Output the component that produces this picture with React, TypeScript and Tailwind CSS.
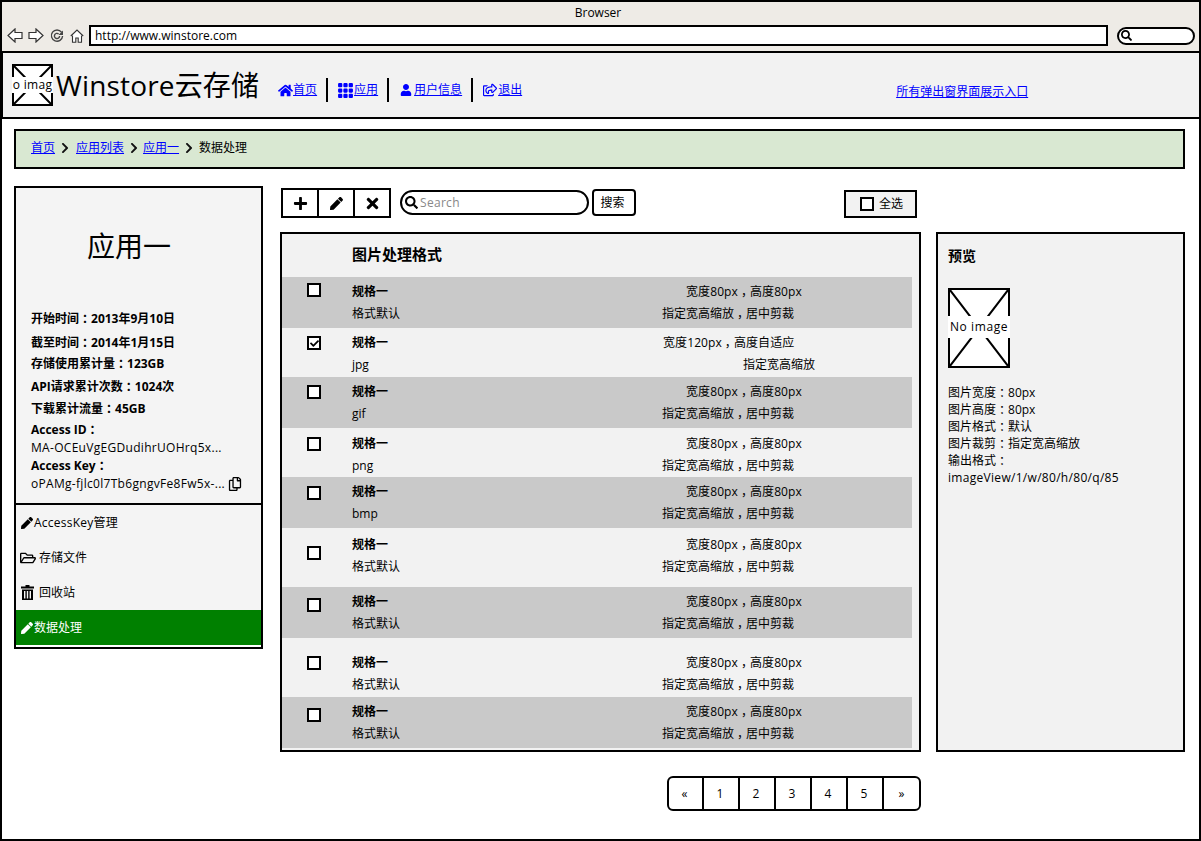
import React from "react";
import { BsGrid3X3GapFill } from "react-icons/bs";
import {
  FaChevronRight,
  FaCheck,
  FaHome,
  FaPen,
  FaPlus,
  FaRegCopy,
  FaRegFolderOpen,
  FaRegShareSquare,
  FaSearch,
  FaTimes,
  FaUser,
} from "react-icons/fa";

type SpecRow = {
  id: number;
  format: string;
  size: string;
  crop: string;
  rowClass: string;
  textClass: string;
  boxClass: string;
  sizeClass: string;
  cropClass: string;
  checked?: boolean;
};

const specRows: SpecRow[] = [
  { id: 1, format: "格式默认", size: "宽度80px，高度80px", crop: "指定宽高缩放，居中剪裁", rowClass: "h-[51px] bg-[#c9c9c9]", textClass: "pt-[3px]", boxClass: "mt-[6px]", sizeClass: "ml-[334px]", cropClass: "ml-[310px]" },
  { id: 2, format: "jpg", size: "宽度120px，高度自适应", crop: "指定宽高缩放", rowClass: "h-[49px]", textClass: "pt-[3px]", boxClass: "mt-[8px]", sizeClass: "ml-[311px]", cropClass: "ml-[391px]", checked: true },
  { id: 3, format: "gif", size: "宽度80px，高度80px", crop: "指定宽高缩放，居中剪裁", rowClass: "h-[51px] bg-[#c9c9c9]", textClass: "pt-[3px]", boxClass: "mt-[8px]", sizeClass: "ml-[334px]", cropClass: "ml-[310px]" },
  { id: 4, format: "png", size: "宽度80px，高度80px", crop: "指定宽高缩放，居中剪裁", rowClass: "h-[49px]", textClass: "pt-[4px]", boxClass: "mt-[9px]", sizeClass: "ml-[334px]", cropClass: "ml-[310px]" },
  { id: 5, format: "bmp", size: "宽度80px，高度80px", crop: "指定宽高缩放，居中剪裁", rowClass: "h-[51px] bg-[#c9c9c9]", textClass: "pt-[3px]", boxClass: "mt-[9px]", sizeClass: "ml-[334px]", cropClass: "ml-[310px]" },
  { id: 6, format: "格式默认", size: "宽度80px，高度80px", crop: "指定宽高缩放，居中剪裁", rowClass: "h-[59px]", textClass: "pt-[5px]", boxClass: "mt-[18px]", sizeClass: "ml-[334px]", cropClass: "ml-[310px]" },
  { id: 7, format: "格式默认", size: "宽度80px，高度80px", crop: "指定宽高缩放，居中剪裁", rowClass: "h-[51px] bg-[#c9c9c9]", textClass: "pt-[3px]", boxClass: "mt-[11px]", sizeClass: "ml-[334px]", cropClass: "ml-[310px]" },
  { id: 8, format: "格式默认", size: "宽度80px，高度80px", crop: "指定宽高缩放，居中剪裁", rowClass: "h-[59px]", textClass: "pt-[13px]", boxClass: "mt-[18px]", sizeClass: "ml-[334px]", cropClass: "ml-[310px]" },
  { id: 9, format: "格式默认", size: "宽度80px，高度80px", crop: "指定宽高缩放，居中剪裁", rowClass: "h-[51px] bg-[#c9c9c9]", textClass: "pt-[3px]", boxClass: "mt-[11px]", sizeClass: "ml-[334px]", cropClass: "ml-[310px]" },
];

const fontStack = "font-['Open_Sans','Noto_Sans_CJK_SC',sans-serif]";

// the picture's font centres ， and ： in their cell: halt halves the glyph, the box centres it
const Zh = ({ text }: { text: string }) => (
  <>
    {text.split(/([，：])/).map((part, i) =>
      part === "，" || part === "：" ? (
        <span key={i} className="inline-block w-[1em] text-center [font-feature-settings:'halt']">
          {part}
        </span>
      ) : (
        <React.Fragment key={i}>{part}</React.Fragment>
      )
    )}
  </>
);

// browser chrome glyphs have no good match in the icon sets
const BackArrow = ({ flip = false }: { flip?: boolean }) => (
  <svg width="16" height="15" viewBox="0 0 16 15" className={flip ? "-scale-x-100" : ""}>
    <path d="M8 1 1 7.5 8 14v-3.5h7v-6H8z" fill="#fff" stroke="#333" strokeWidth="1.2" />
  </svg>
);

const ReloadIcon = () => (
  <svg width="14" height="14" viewBox="0 0 14 14" fill="none" stroke="#444" strokeWidth="1.4">
    <path d="M11.5 3.2A5.6 5.6 0 1 0 12.6 7" />
    <path d="M9.6 7A2.6 2.6 0 1 1 8.6 4.9" />
    <path d="M13 1.5v4.5H8.5z" fill="#444" stroke="none" />
  </svg>
);

const HomeOutline = () => (
  <svg width="14" height="14" viewBox="0 0 14 14" fill="#fff" stroke="#333" strokeWidth="1.1">
    <path d="M.8 7 7 1l6.2 6" />
    <path d="M2.5 6.5v6.7h3.3V9h2.4v4.2h3.3V6.5" />
  </svg>
);

const TrashIcon = () => (
  <svg width="13" height="15" viewBox="0 0 13 15" className="mr-[5px] ml-[1px]">
    <path d="M4.5 0h4v1.5H13V3.5H0V1.5h4.5z" fill="#000" />
    <path d="M1 4.5h11V15H1zM3 6v7.5h1.4V6zM5.8 6v7.5h1.4V6zM8.6 6v7.5H10V6z" fill="#000" fillRule="evenodd" />
  </svg>
);

const Checkbox = ({ checked }: { checked?: boolean }) => (
  <span className="flex h-[14px] w-[14px] items-center justify-center border-2 border-black bg-white">
    {checked && <FaCheck className="text-[9px] text-black" />}
  </span>
);

const NoImage = ({ big = false }: { big?: boolean }) => (
  <div className={big ? "relative h-[80px] w-[62px]" : "relative h-[42px] w-[41px]"}>
    <div className="h-full w-full border-2 border-black bg-white">
      <svg className="h-full w-full" viewBox="0 0 100 100" preserveAspectRatio="none">
        <path d="M0 0 100 100M100 0 0 100" stroke="#000" strokeWidth="2" vectorEffect="non-scaling-stroke" fill="none" />
      </svg>
    </div>
    <div
      className={
        big
          ? "absolute top-[28px] left-0 flex h-[22px] w-[62px] items-center justify-center bg-white tracking-[0.6px] whitespace-nowrap"
          : "absolute top-[13px] left-0 flex h-[16px] w-[41px] items-center justify-center bg-white tracking-[0.3px] whitespace-nowrap"
      }
    >
      {big ? "No image" : "o imag"}
    </div>
  </div>
);

const NavLink = ({ icon, label }: { icon: React.ReactNode; label: string }) => (
  <a href="#" className="flex items-center text-[12px] text-[#0000ff] underline">
    {icon}
    <span>{label}</span>
  </a>
);

const Crumb = ({ label, className }: { label: string; className?: string }) => (
  <span className={`flex items-center ${className ?? ""}`}>
    <a href="#" className="text-[#0000ff] underline">
      {label}
    </a>
    <span className="flex w-[19px] justify-center">
      <FaChevronRight className="text-[12px] text-[#111]" />
    </span>
  </span>
);

const Stat = ({ children, className }: { children: string; className?: string }) => (
  <div className={`leading-[18px] font-bold ${className ?? ""}`}>
    <Zh text={children} />
  </div>
);

const MenuRow = ({ icon, label, active, className }: { icon: React.ReactNode; label: string; active?: boolean; className?: string }) => (
  <div className={active ? "flex h-[35px] items-center bg-[#008000] pl-[4px] text-white" : "flex h-[35px] items-center pl-[4px]"}>
    {icon}
    <span className={className}>{label}</span>
  </div>
);

export default function App() {
  return (
    <div className={`flex h-[841px] w-[1201px] flex-col overflow-hidden border-2 border-black bg-white text-[12px] text-black ${fontStack}`}>
      {/* browser chrome */}
      <div className="h-[49px] shrink-0 bg-[#eeebe6]">
        <div className="pt-[2px] pr-[5px] text-center text-[12px] leading-[17px]">Browser</div>
        <div className="mt-[4px] flex items-center pl-[5px]">
          <BackArrow />
          <span className="ml-[5px]">
            <BackArrow flip />
          </span>
          <span className="ml-[6px]">
            <ReloadIcon />
          </span>
          <span className="ml-[6px]">
            <HomeOutline />
          </span>
          <div className="ml-[5px] flex h-[21px] w-[1019px] items-center border-2 border-black bg-white pl-[4px] text-[12px] leading-none">
            http://www.winstore.com
          </div>
          <div className="ml-[9px] flex h-[18px] w-[78px] items-center rounded-full border-2 border-black bg-white pl-[2px]">
            <FaSearch className="text-[11px]" />
          </div>
        </div>
      </div>

      {/* site header */}
      <div className="flex h-[68px] shrink-0 items-center border-y-2 border-l border-black bg-[#f2f2f2] pl-[9px]">
        <NoImage />
        <div className="ml-[3px] text-[28px] leading-none tracking-[0.15px] whitespace-nowrap">Winstore云存储</div>
        <div className="ml-[19px] flex items-center pt-[10px]">
          <NavLink icon={<FaHome className="text-[15px]" />} label="首页" />
          <span className="mr-[10px] ml-[9px] h-[24px] w-[2px] bg-black" />
          <NavLink icon={<BsGrid3X3GapFill className="-mx-[1px] mr-[0px] text-[17px]" />} label="应用" />
          <span className="mr-[11px] ml-[9px] h-[24px] w-[2px] bg-black" />
          <NavLink icon={<FaUser className="mr-[2px] text-[12px]" />} label="用户信息" />
          <span className="mr-[10px] ml-[9px] h-[24px] w-[2px] bg-black" />
          <NavLink icon={<FaRegShareSquare className="mr-[1px] text-[14px]" />} label="退出" />
        </div>
        <a href="#" className="ml-[374px] pt-[14px] text-[12px] text-[#0000ff] underline">
          所有弹出窗界面展示入口
        </a>
      </div>

      <div className="flex flex-1 flex-col pr-[14px] pl-[12px]">
        {/* breadcrumb */}
        <div className="mt-[10px] flex h-[40px] items-center border-2 border-black bg-[#d9e8d2] pb-[2px] pl-[15px]">
          <Crumb label="首页" className="pr-[2px]" />
          <Crumb label="应用列表" />
          <Crumb label="应用一" className="pr-[1px]" />
          <span>数据处理</span>
        </div>

        <div className="mt-[17px] flex">
          {/* side card */}
          <div className="h-[463px] w-[249px] shrink-0 border-2 border-black bg-[#f4f4f4] pb-[2px]">
            <div className="h-[317px] border-b-2 border-black pl-[15px]">
              <div className="pt-[36px] pl-[56px] text-[28px] leading-[44px]">应用一</div>
              <Stat className="mt-[42px]">开始时间：2013年9月10日</Stat>
              <Stat className="mt-[6px]">截至时间：2014年1月15日</Stat>
              <Stat className="mt-[3px]">存储使用累计量：123GB</Stat>
              <Stat className="mt-[5px]">API请求累计次数：1024次</Stat>
              <Stat className="mt-[4px]">下载累计流量：45GB</Stat>
              <Stat className="mt-[3px]">Access ID：</Stat>
              <div className="leading-[18px] tracking-[0.3px] whitespace-nowrap">MA-OCEuVgEGDudihrUOHrq5x...</div>
              <Stat>Access Key：</Stat>
              <div className="flex items-center leading-[18px] tracking-[0.3px] whitespace-nowrap">
                oPAMg-fjlc0l7Tb6gngvFe8Fw5x-...
                <FaRegCopy className="ml-[3px] text-[14px]" />
              </div>
            </div>
            <MenuRow icon={<FaPen className="mr-[1px] ml-[1px] text-[12px]" />} label="AccessKey管理" className="tracking-[0.25px]" />
            <MenuRow icon={<FaRegFolderOpen className="mr-[3px] text-[16px]" />} label="存储文件" />
            <MenuRow icon={<TrashIcon />} label="回收站" />
            <MenuRow active icon={<FaPen className="mr-[1px] ml-[1px] text-[12px]" />} label="数据处理" />
            <div className="h-[2px] bg-white" />
          </div>

          <div className="ml-[17px] flex-1">
            {/* toolbar */}
            <div className="flex h-[46px] items-start pl-[1px]">
              <div className="mt-[2px] flex h-[30px] w-[110px] border-2 border-black">
                <button className="flex w-[36px] items-center justify-center border-r-2 border-black">
                  <FaPlus className="text-[15px]" />
                </button>
                <button className="flex w-[36px] items-center justify-center border-r-2 border-black">
                  <FaPen className="text-[13px]" />
                </button>
                <button className="flex flex-1 items-center justify-center">
                  <FaTimes className="text-[17px]" />
                </button>
              </div>
              <div className="mt-[4px] ml-[9px] flex h-[25px] w-[189px] items-center rounded-full border-2 border-black bg-white pl-[3px] tracking-[0.3px] text-[#888]">
                <FaSearch className="mr-[2px] text-[13px] text-black" />
                Search
              </div>
              <button className="mt-[3px] ml-[3px] h-[27px] w-[44px] rounded-[4px] border-2 border-black bg-white pr-[3px]">搜索</button>
              <div className="mt-[4px] ml-[208px] flex h-[28px] w-[73px] items-center border-2 border-black bg-[#f2f2f2] pl-[14px]">
                <Checkbox />
                <span className="ml-[5px]">全选</span>
              </div>
            </div>

            <div className="flex">
              {/* spec table */}
              <div className="h-[520px] w-[641px] shrink-0 border-2 border-black bg-[#f2f2f2]">
                <div className="h-[43px] pt-[10px] pl-[70px] text-[15px] leading-[20px] font-bold">图片处理格式</div>
                {specRows.map((row) => (
                  <div key={row.id} className={`flex w-[630px] ${row.rowClass}`}>
                    <div className={`ml-[25px] h-fit ${row.boxClass}`}>
                      <Checkbox checked={row.checked} />
                    </div>
                    <div className={`ml-[31px] w-[0px] ${row.textClass}`}>
                      <div className="mt-[1px] flex h-[22px] items-center whitespace-nowrap">
                        <span className="w-0 font-bold">规格一</span>
                        <span className={`${row.sizeClass} tracking-[0.1px]`}>
                          <Zh text={row.size} />
                        </span>
                      </div>
                      <div className="flex h-[22px] items-center whitespace-nowrap">
                        <span className="w-0">{row.format}</span>
                        <span className={row.cropClass}>
                          <Zh text={row.crop} />
                        </span>
                      </div>
                    </div>
                  </div>
                ))}
              </div>

              {/* preview */}
              <div className="ml-[15px] h-[520px] w-[249px] shrink-0 border-2 border-black bg-[#f2f2f2] pl-[10px]">
                <div className="pt-[12px] text-[14px] leading-[20px] font-bold">预览</div>
                <div className="mt-[22px]">
                  <NoImage big />
                </div>
                <div className="mt-[16px] leading-[17px]">
                  <div><Zh text="图片宽度：80px" /></div>
                  <div><Zh text="图片高度：80px" /></div>
                  <div><Zh text="图片格式：默认" /></div>
                  <div><Zh text="图片裁剪：指定宽高缩放" /></div>
                  <div><Zh text="输出格式：" /></div>
                  <div className="tracking-[0.3px]">imageView/1/w/80/h/80/q/85</div>
                </div>
              </div>
            </div>

            {/* pagination */}
            <div className="mt-[24px] ml-[387px] flex h-[35px] w-[254px] overflow-hidden rounded-[6px] border-2 border-black bg-white">
              {["«", "1", "2", "3", "4", "5", "»"].map((page, i) => (
                <div key={i} className="flex w-[36px] items-center justify-center border-r-2 border-black pr-[2px] first:w-[35px] last:flex-1 last:border-r-0 last:pr-0">
                  {page}
                </div>
              ))}
            </div>
          </div>
        </div>
      </div>
    </div>
  );
}
